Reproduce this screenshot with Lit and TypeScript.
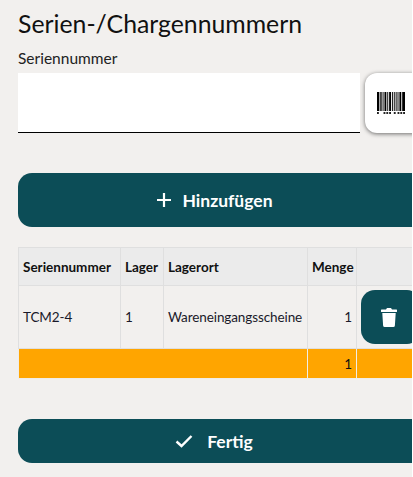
import { LitElement, html, css } from "lit";
import { customElement } from "lit/decorators.js";

@customElement("app-root")
export class AppRoot extends LitElement {
  static styles = css`
    :host { display: block; width: 413px; height: 477px; background: #fff; overflow: hidden;
      font-family: Lato, "Noto Sans", sans-serif; color: #1a1a2a; }
    .page { width: 412px; height: 477px; background: #f2f0ee; overflow: hidden; padding: 8px 0 0 18px; box-sizing: border-box; }
    h1 { margin: 0; font-size: 24.8px; line-height: 32px; font-weight: 400; color: #111; white-space: nowrap; }
    .label { font-size: 15.5px; line-height: 20px; margin-top: 8px; color: #222; }
    .input-row { display: flex; gap: 5px; margin-top: 5px; width: 440px; height: 60px; }
    .input { width: 342px; height: 60px; box-sizing: border-box; background: #fff; border-bottom: 1px solid #000; }
    .scan { width: 60px; height: 60px; box-sizing: border-box; background: #fff; border-radius: 12px;
      box-shadow: 0 1px 4px rgba(0,0,0,.55); display: flex; align-items: center; padding-left: 12px; }
    .btn { width: 420px; background: #0c4d57; color: #fff; border-radius: 14px; display: flex; align-items: center;
      justify-content: center; font-weight: 700; box-sizing: border-box; }
    .add { height: 54px; margin-top: 40px; font-size: 17.5px; gap: 10px; padding-right: 27px; }
    .done { height: 44px; margin-top: 40px; font-size: 17.5px; gap: 14px; padding-right: 28px; }
    table { margin-top: 20px; border-collapse: collapse; table-layout: fixed; width: 420px; font-size: 13.5px; }
    th, td { border: 1px solid #dfdfdf; padding: 0 4px; text-align: left; white-space: nowrap; overflow: hidden; }
    th { height: 37px; background: #ebebeb; font-weight: 700; color: #111; }
    .row td { height: 62px; letter-spacing: -0.1px; }
    .num { text-align: right; }
    .sum td { height: 29px; background: #ffa500; border-color: #f0ede8; color: #111; }
    .del-cell { padding: 0 0 0 4px; }
    .del { width: 60px; height: 54px; background: #0c4d57; border-radius: 14px; display: flex; align-items: center; padding-left: 20px; box-sizing: border-box; }
    svg { display: block; }
  `;

  render() {
    return html`<div class="page">
      <h1>Serien-/Chargennummern</h1>
      <div class="label">Seriennummer</div>
      <div class="input-row">
        <div class="input"></div>
        <div class="scan">
          <svg width="28" height="22" viewBox="0 0 30 22" preserveAspectRatio="none">
            <path d="M0 0h2.5v19H0zM3.5 0h1.5v19H3.5zM6 0h1v19H6zM8 0h2v19H8zM11 0h1v19h-1zM13 0h2v19h-2zM16 0h1v19h-1zM18 0h1v19h-1zM20 0h1v19h-1zM22 0h1v19h-1zM24 0h2v19h-2zM27 0h3v19h-3z" fill="#000"/>
            <path d="M0 20h2v2H0zM7 20h2v2H7zM10 20h2v2h-2zM13 20h2v2h-2zM18 20h2v2h-2zM22 20h2v2h-2zM25 20h2v2h-2zM28 20h2v2h-2z" fill="#222"/>
          </svg>
        </div>
      </div>
      <div class="btn add">
        <svg width="16" height="16" viewBox="0 0 16 16"><path d="M8 1v14M1 8h14" stroke="#fff" stroke-width="2.2" fill="none"/></svg>
        <span>Hinzufügen</span>
      </div>
      <table>
        <colgroup><col style="width:102px"/><col style="width:43px"/><col style="width:144px"/><col style="width:49px"/><col/></colgroup>
        <thead><tr><th>Seriennummer</th><th>Lager</th><th>Lagerort</th><th>Menge</th><th></th></tr></thead>
        <tbody>
          <tr class="row"><td>TCM2-4</td><td>1</td><td>Wareneingangsscheine</td><td class="num">1</td>
            <td class="del-cell"><div class="del">
              <svg width="16" height="19" viewBox="0 0 16 19"><path d="M6 0h4l1 1.5h4.2a.8.8 0 0 1 0 2.5H.8a.8.8 0 0 1 0-2.5H5zM1.3 5h13.4l-.8 12.5a1.6 1.6 0 0 1-1.6 1.5H3.7a1.6 1.6 0 0 1-1.6-1.5z" fill="#fff"/></svg>
            </div></td></tr>
        </tbody>
        <tfoot><tr class="sum"><td colspan="3"></td><td class="num">1</td><td></td></tr></tfoot>
      </table>
      <div class="btn done">
        <svg width="18" height="14" viewBox="0 0 18 14"><path d="M1.5 7.5l5 4.5L16.5 2" stroke="#fff" stroke-width="2.4" fill="none"/></svg>
        <span>Fertig</span>
      </div>
    </div>`;
  }
}
